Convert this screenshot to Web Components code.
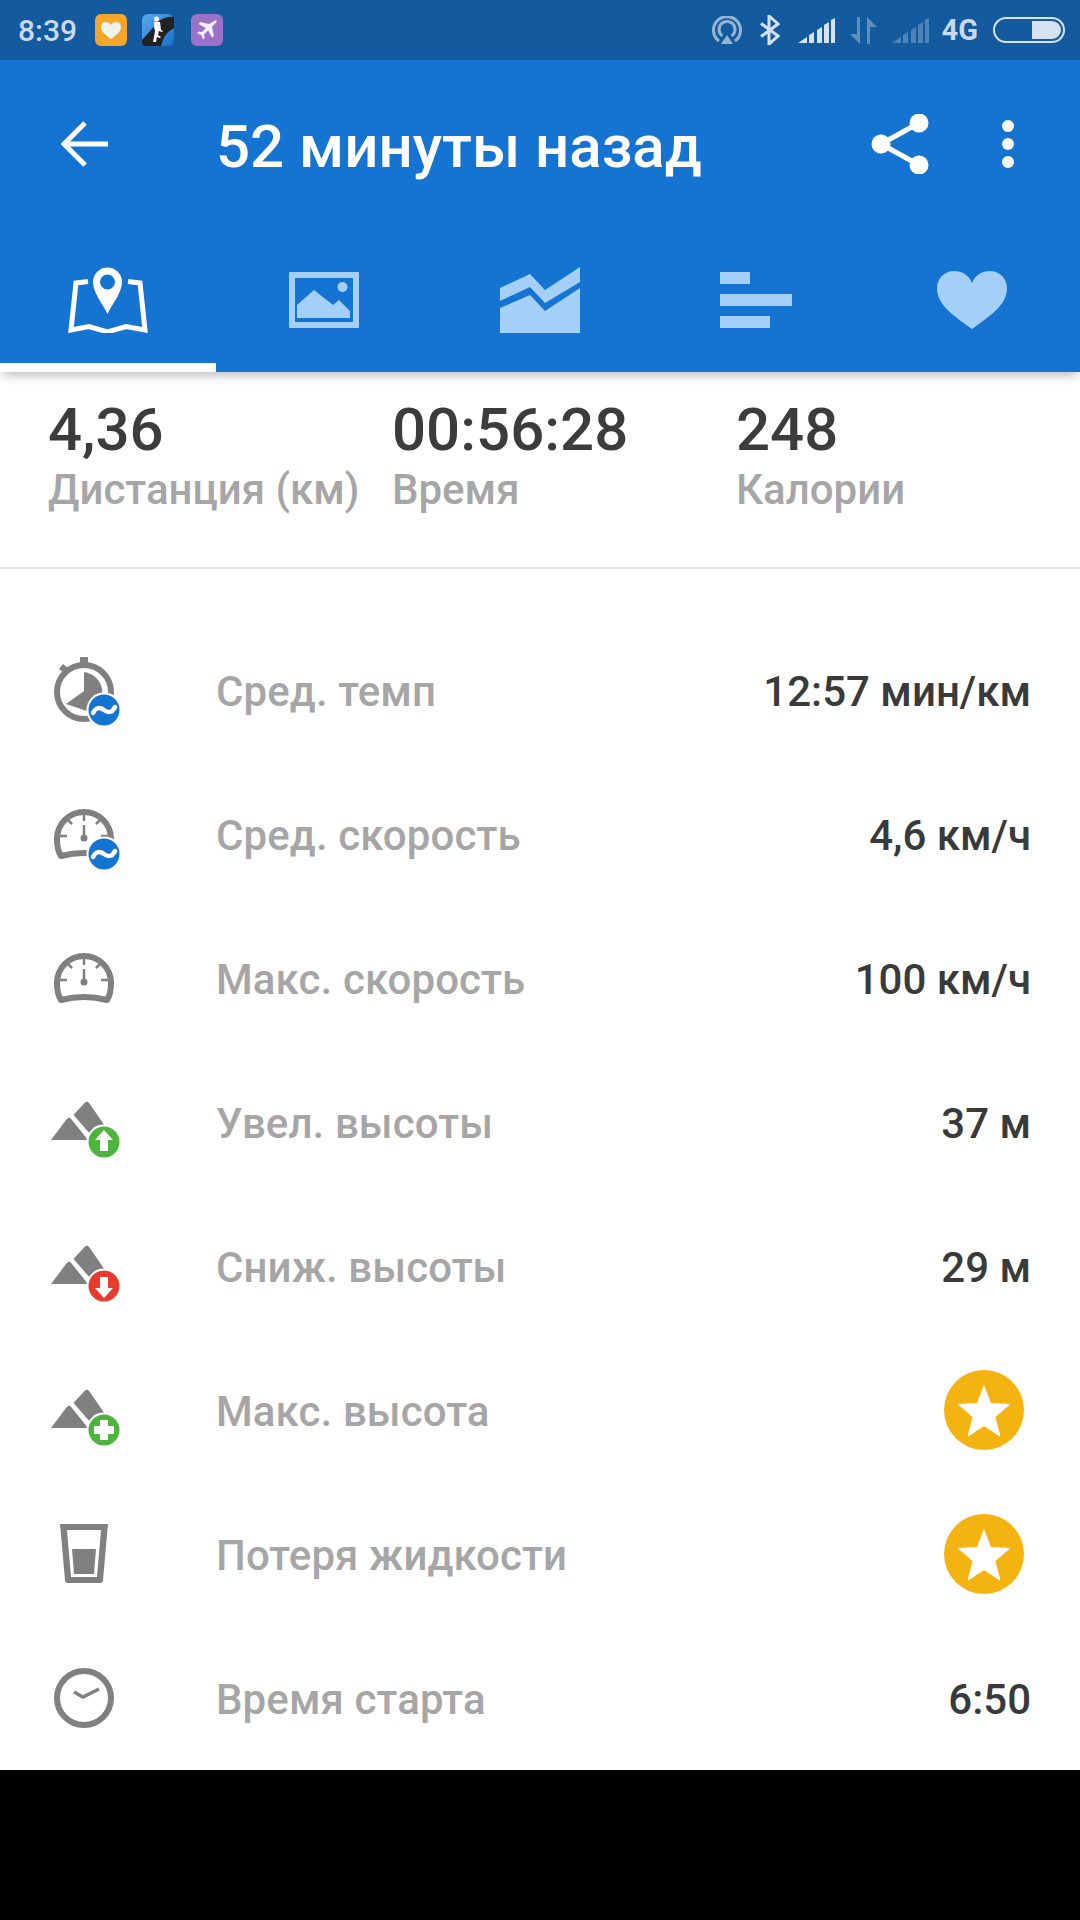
<!DOCTYPE html>
<html>
<head>
<meta charset="utf-8">
<style>
  html, body { margin: 0; background: #000; }
  body { width: 1080px; height: 1920px; overflow: hidden; font-family: Roboto, "Liberation Sans", sans-serif; }
</style>
</head>
<body>
<status-bar></status-bar>
<app-bar title="52 минуты назад"></app-bar>
<stats-panel>
  <stat-item value="4,36" label="Дистанция (км)"></stat-item>
  <stat-item value="00:56:28" label="Время"></stat-item>
  <stat-item value="248" label="Калории"></stat-item>
</stats-panel>
<metric-list>
  <metric-row icon="pace" label="Сред. темп" value="12:57 мин/км"></metric-row>
  <metric-row icon="avgspeed" label="Сред. скорость" value="4,6 км/ч"></metric-row>
  <metric-row icon="maxspeed" label="Макс. скорость" value="100 км/ч"></metric-row>
  <metric-row icon="up" label="Увел. высоты" value="37 м"></metric-row>
  <metric-row icon="down" label="Сниж. высоты" value="29 м"></metric-row>
  <metric-row icon="plus" label="Макс. высота" premium></metric-row>
  <metric-row icon="glass" label="Потеря жидкости" premium></metric-row>
  <metric-row icon="clock" label="Время старта" value="6:50"></metric-row>
</metric-list>

<script>
class StatusBar extends HTMLElement {
  constructor() {
    super();
    this.shadow = this.attachShadow({ mode: 'open' });
  }

  connectedCallback() {
    this.shadow.innerHTML = `
    <style>
      :host { display: flex; align-items: center; height: 60px; background: #135a9f; color: #c9d9ef; padding: 0 15px 0 18px; }
      .time { font-size: 30px; font-weight: 500; width: 77px; }
      .app { display: block; width: 32px; height: 32px; margin-right: 15px; }
      .app.mid { margin-right: 17px; }
      .right { margin-left: auto; display: flex; align-items: center; }
      svg { display: block; }
      .g { font-size: 29px; font-weight: 700; margin: 0 15px 0 13px; }
    </style>
    <span class="time">8:39</span>
    <svg class="app" viewBox="0 0 32 32"><rect width="32" height="32" rx="6" fill="#f5a52a"/><path d="M16 25C10 20.500 6 17.500 6 13c0-3 2.300-5 5-5 2 0 4 1 5 3 1-2 3-3 5-3 2.700 0 5 2 5 5 0 4.500-4 7.500-10 12z" fill="#eef5e8"/></svg>
    <svg class="app mid" viewBox="0 0 32 32"><defs><linearGradient id="b" x1="0" y1="0" x2="1" y2="1"><stop offset="0" stop-color="#58a8ea"/><stop offset="1" stop-color="#1a70cc"/></linearGradient></defs><rect width="32" height="32" rx="6" fill="url(#b)"/><path d="M0 26L17 7Q24 2 32 3V14Q24 18 21 26L19 32H5Q0 32 0 28z" fill="#222"/><circle cx="14.500" cy="5" r="2.500" fill="#fff"/><path d="M12 8h6l1 8 2 1-1 1-3-1-1 4 3 2-1 1-3-1-1 5h-3l2-11-1-4z" fill="#fff"/></svg>
    <svg class="app" viewBox="0 0 32 32"><rect width="32" height="32" rx="6" fill="#9a72c8"/><path d="M24 6.500c1.300-.7 2.200.2 1.500 1.500l-4.500 5 2 9-2 1.500-3.800-7-4 3.800.5 3.700-1.500 1.300-2-4.200-4.200-2 1.300-1.500 3.700.5 3.800-4-7-3.800L9 8l9 2z" fill="#f3eef9"/></svg>
    <div class="right">
      <svg width="30" height="29" viewBox="0 0 30 29" style="margin-right:18px;opacity:.55" fill="none" stroke="#fff" stroke-width="3"><path d="M7 25A13.500 13.500 0 1 1 23 25"/><path d="M10.500 20A8 8 0 1 1 19.500 20"/><path d="M15 19l6 9H9z" fill="#fff" stroke="none"/></svg>
      <svg width="20" height="30" viewBox="0 0 20 30" style="margin-right:18px" fill="none" stroke="#d6e2f3" stroke-width="3"><path d="M1 8.500L18 21 9 29V1l9 8L1 21.500"/></svg>
      <signal-bars style="margin-right:15px"></signal-bars>
      <svg width="27" height="27" viewBox="0 0 27 27" style="margin-right:15px;opacity:.32" fill="#fff"><path d="M10 0v27L0 17h7V0zM17 27V0l10 10h-7v17z"/></svg>
      <signal-bars style="opacity:.3"></signal-bars>
      <span class="g">4G</span>
      <svg width="72" height="26" viewBox="0 0 72 26"><rect x="1" y="1" width="70" height="24" rx="12" fill="none" stroke="#d6e2f3" stroke-width="2"/><path d="M39 4H59a9 9 0 0 1 0 18H39z" fill="#d6e2f3"/></svg>
    </div>
    `;
  }
}

class SignalBars extends HTMLElement {
  constructor() {
    super();
    this.shadow = this.attachShadow({ mode: 'open' });
  }

  connectedCallback() {
    this.shadow.innerHTML = `
    <style>
      :host { display: block; width: 37px; height: 25px; }
      svg { display: block; }
    </style>
    <svg width="37" height="25" viewBox="0 0 37 25" fill="#d6e2f3"><path d="M0 25l9-6v6zM11 17l5-3v11h-5zM19 12l5-3v16h-5zM26 7l5-3v21h-5zM33 2l4-2v25h-4z"/></svg>
    `;
  }
}

class AppBar extends HTMLElement {
  constructor() {
    super();
    this.shadow = this.attachShadow({ mode: 'open' });
  }

  connectedCallback() {
    this.shadow.innerHTML = `
    <style>
      :host { display: block; position: relative; z-index: 2; background: #1574d2; box-shadow: 0 6px 10px -3px rgba(0,0,0,.28); }
      .toolbar { display: flex; align-items: center; height: 168px; color: #fff; padding-left: 61px; }
      .title { font-size: 60px; font-weight: 500; margin-left: 108px; padding-top: 4px; flex: 1; white-space: nowrap; }
      .share { margin-right: 73px; }
      .more { margin-right: 66px; }
      svg { display: block; }
      .tabs { display: grid; grid-template-columns: repeat(5, 216px); height: 144px; }
      .tab { box-sizing: border-box; padding-top: 39px; display: flex; justify-content: center; color: #a3cff8; }
      .tab.on { color: #fff; border-bottom: 9px solid #fff; }
    </style>
    <div class="toolbar">
      <svg width="47" height="46" viewBox="0 0 47 46" fill="none" stroke="#fff" stroke-width="5"><path d="M47 23H4M24 2L3 23l21 21"/></svg>
      <div class="title">${this.getAttribute('title')}</div>
      <svg class="share" width="58" height="60" viewBox="0 0 58 60" fill="#fff"><circle cx="10" cy="30" r="9.500"/><circle cx="48" cy="9" r="9.500"/><circle cx="48" cy="51" r="9.500"/><path d="M10 30L48 9M10 30L48 51" stroke="#fff" stroke-width="5"/></svg>
      <svg class="more" width="12" height="48" viewBox="0 0 12 48" fill="#fff"><circle cx="6" cy="6" r="6"/><circle cx="6" cy="24" r="6"/><circle cx="6" cy="42" r="6"/></svg>
    </div>
    <div class="tabs">
      <div class="tab on">
        <svg width="80" height="66" viewBox="0 0 80 66" fill="none" stroke="currentColor" stroke-width="5"><path d="M20 14.500L8 16 3 63l18-3.500L39.500 65 58 59.500 77 63 72 16 60 14.500"/><path fill="currentColor" stroke="none" fill-rule="evenodd" d="M39.500 47C35 37 25 26 25 15a14.500 14.500 0 0 1 29 0C54 26 44 37 39.500 47zM39.500 7.500a7.500 7.500 0 1 0 0 15 7.500 7.500 0 0 0 0-15z"/></svg>
      </div>
      <div class="tab">
        <svg width="80" height="66" viewBox="0 0 80 66" fill="currentColor"><path fill-rule="evenodd" d="M5 5h70v56H5zM11 11v44h58V11z"/><circle cx="58.500" cy="20" r="5"/><path d="M13 51V38L30 23 49 38 55 33 66 44v7z"/></svg>
      </div>
      <div class="tab">
        <svg width="80" height="66" viewBox="0 0 80 66" fill="currentColor"><path d="M0 21L30 7 45 23 80 0V15L45 36 30 20 0 34zM0 41L30 28 45 44 80 21V66H0z"/></svg>
      </div>
      <div class="tab">
        <svg width="72" height="66" viewBox="0 0 72 66" fill="currentColor"><path d="M0 5h30v12H0zM0 27h72v12H0zM0 49h50v12H0z"/></svg>
      </div>
      <div class="tab">
        <svg width="70" height="66" viewBox="0 0 70 66" fill="currentColor"><path d="M35 62C14 47 0 37 0 21 0 11 8 4 17 4c8 0 15 4 18 12 3-8 10-12 18-12 9 0 17 7 17 17 0 16-14 26-35 41z"/></svg>
      </div>
    </div>
    `;
  }
}

class StatsPanel extends HTMLElement {
  constructor() {
    super();
    this.attachShadow({ mode: 'open' }).innerHTML = `
    <style>
      :host { display: grid; grid-template-columns: repeat(3, 344px); box-sizing: border-box; height: 197px; padding: 22px 0 0 48px; background: #fff; border-bottom: 2px solid #e2e2e2; }
    </style>
    <slot></slot>
    `;
  }
}

class StatItem extends HTMLElement {
  constructor() {
    super();
    this.shadow = this.attachShadow({ mode: 'open' });
  }

  connectedCallback() {
    this.shadow.innerHTML = `
    <style>
      :host { display: block; white-space: nowrap; }
      .v { font-size: 60px; font-weight: 500; color: #3c3c3c; line-height: 72px; }
      .l { font-size: 42px; font-weight: 500; color: #a6a6a6; line-height: 48px; }
    </style>
    <div class="v">${this.getAttribute('value')}</div>
    <div class="l">${this.getAttribute('label')}</div>
    `;
  }
}

class MetricList extends HTMLElement {
  constructor() {
    super();
    this.attachShadow({ mode: 'open' }).innerHTML = `
    <style>
      :host { display: block; background: #fff; padding-top: 51px; height: 1201px; box-sizing: border-box; }
    </style>
    <slot></slot>
    `;
  }
}

const G = '#808080';
const mountain = `<path d="M21 76L36 56c2-3 4-3 6 0l16 20z" fill="${G}"/><path d="M43.500 51L54 39.500c2-2.500 4-2.500 5.500 0L75 62 62 72z" fill="${G}"/>`;
const badge = (color, inner) => `<g transform="translate(1 0)"><circle cx="73" cy="78" r="17.500" fill="#fff"/><circle cx="73" cy="78" r="15.500" fill="${color}"/>${inner}</g>`;
const wave = `<path d="M62 81c3-6 7-6 11-3s8 3 11-3" fill="none" stroke="#fff" stroke-width="4.500" stroke-linecap="round"/>`;
const dial = `<g transform="translate(0 2)"><path d="M31 78C27 72 27 66 27 61a27 27 0 0 1 54 0c0 5 0 11-4 17C62 74 46 74 31 78z" fill="none" stroke="${G}" stroke-width="6" stroke-linejoin="round"/>
  <path d="M54 37v6M30 58h7M71 58h7M37 41l5 5M71 41l-5 5" stroke="${G}" stroke-width="2.500"/>
  <path d="M54 47v13" stroke="${G}" stroke-width="2.500"/><circle cx="54" cy="60" r="3.500" fill="${G}"/></g>`;
const ICONS = {
  pace: `<circle cx="54" cy="60" r="27" fill="none" stroke="${G}" stroke-width="6"/>
    <path d="M50 25h8v6h-8zM29 37l4-5 6 5-4 5z" fill="${G}"/>
    <path d="M54 40a21 21 0 0 1 6 40l-24-8 18-13z" fill="${G}"/>${badge('#1574d2', wave)}`,
  avgspeed: dial + badge('#1574d2', wave),
  maxspeed: dial,
  up: mountain + badge('#4cb53c', '<path d="M73 66l9 10h-5v11h-8V76h-5z" fill="#fff"/>'),
  down: mountain + badge('#e83b2e', '<path d="M73 90l9-10h-5V69h-8v11h-5z" fill="#fff"/>'),
  plus: mountain + badge('#4cb53c', '<path d="M69 68h8v6h6v8h-6v6h-8v-6h-6v-8h6z" fill="#fff"/>'),
  glass: `<path fill-rule="evenodd" d="M30 28h48l-5 56c0 2-1 3-3 3H38c-2 0-3-1-3-3zM37 34l4 47h26l4-47z" fill="${G}"/><path d="M42 53h24l-2 25H44z" fill="${G}"/>`,
  clock: `<circle cx="54" cy="58" r="27" fill="none" stroke="${G}" stroke-width="6"/><path d="M44 52l9 5 16-8" fill="none" stroke="${G}" stroke-width="3.500"/>`
};

class MetricRow extends HTMLElement {
  constructor() {
    super();
    this.shadow = this.attachShadow({ mode: 'open' });
  }

  connectedCallback() {
    const value = this.hasAttribute('premium')
      ? `<svg class="star" width="80" height="80" viewBox="0 0 80 80"><circle cx="40" cy="40" r="40" fill="#f3b311"/><path d="M40 15l7 18 19.500 1-15 13 5 20L40 56 23.500 67l5-20-15-13L33 33z" fill="#fff"/></svg>`
      : `<span class="v">${this.getAttribute('value')}</span>`;
    this.shadow.innerHTML = `
    <style>
      :host { display: flex; align-items: center; height: 144px; padding: 0 49px 0 30px; }
      .icon { display: block; width: 120px; height: 120px; flex: none; }
      .l { font-size: 42px; font-weight: 500; color: #a6a6a6; margin-left: 66px; flex: 1; padding-bottom: 2px; letter-spacing: .1px; }
      .v { font-size: 42px; font-weight: 500; color: #3a3a3a; padding-bottom: 2px; }
      .star { display: block; margin: 0 7px 4px 0; }
    </style>
    <svg class="icon" viewBox="0 0 120 120">${ICONS[this.getAttribute('icon')]}</svg>
    <span class="l">${this.getAttribute('label')}</span>
    ${value}
    `;
  }
}

customElements.define('signal-bars', SignalBars);
customElements.define('status-bar', StatusBar);
customElements.define('app-bar', AppBar);
customElements.define('stats-panel', StatsPanel);
customElements.define('stat-item', StatItem);
customElements.define('metric-list', MetricList);
customElements.define('metric-row', MetricRow);
</script>
</body>
</html>
